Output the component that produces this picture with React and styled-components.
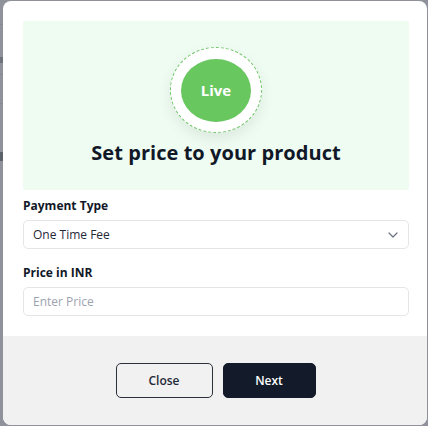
import React from "react";
import styled, { createGlobalStyle } from "styled-components";

const Global = createGlobalStyle`
  html, body { margin: 0; padding: 0; }
  body {
    background: #8f929a;
    font-family: "Open Sans", "Noto Sans", Arial, sans-serif;
    width: 428px;
    height: 426px;
    overflow: hidden;
  }
`;

const Backdrop = styled.div`
  position: relative;
  width: 428px;
  height: 426px;
  padding: 1px 1px 1px 3px;
  box-sizing: border-box;
`;

const GhostLine = styled.div`
  position: absolute;
  left: 0;
  width: 3px;
  top: ${(p) => p.$top}px;
  height: ${(p) => p.$h}px;
  background: ${(p) => p.$c};
`;

const Modal = styled.div`
  position: relative;
  width: 424px;
  height: 424px;
  background: #ffffff;
  border-radius: 8px;
  overflow: hidden;
  display: flex;
  flex-direction: column;
`;

const Body = styled.div`
  padding: 20px 18px 0 20px;
  display: flex;
  flex-direction: column;
  flex: 1;
`;

const Hero = styled.div`
  height: 169px;
  background: #effcf2;
  border-radius: 2px;
  display: flex;
  flex-direction: column;
  align-items: center;
  padding-top: 26px;
  box-sizing: border-box;
`;

const Ring = styled.div`
  width: 92px;
  height: 86px;
  box-sizing: border-box;
  border-radius: 50%;
  border: 1px dashed #6cc764;
  background: #ffffff;
  box-shadow: 0 6px 14px rgba(0, 0, 0, 0.08);
  display: flex;
  align-items: center;
  justify-content: center;
`;

const Dot = styled.div`
  width: 70px;
  height: 63px;
  border-radius: 50%;
  background: #68c75f;
  color: #ffffff;
  font-weight: 700;
  font-size: 15px;
  display: flex;
  align-items: center;
  justify-content: center;
  padding-bottom: 1px;
  box-sizing: border-box;
`;

const Title = styled.h2`
  margin: 6px 0 0;
  font-size: 20px;
  font-weight: 700;
  color: #111827;
  letter-spacing: 0.05px;
`;

const Field = styled.div`
  display: flex;
  flex-direction: column;
  margin-top: ${(p) => p.$mt}px;
`;

const Label = styled.label`
  font-size: 12px;
  font-weight: 700;
  color: #111827;
  line-height: 16px;
  margin-bottom: 6px;
`;

const Control = styled.div`
  height: 29px;
  box-sizing: border-box;
  border: 1px solid #e3e5e8;
  border-radius: 5px;
  display: flex;
  align-items: center;
  justify-content: space-between;
  padding: 0 10px 0 9px;
  font-size: 12px;
  color: ${(p) => (p.$placeholder ? "#9ca3af" : "#1f2937")};
`;

const Footer = styled.div`
  height: 89px;
  background: #f1f1f1;
  display: flex;
  justify-content: center;
  gap: 10px;
  padding: 27px 0 0 1px;
  box-sizing: border-box;
`;

const Button = styled.button`
  height: 35px;
  width: ${(p) => p.$w}px;
  border-radius: 5px;
  font-family: inherit;
  font-size: 12px;
  font-weight: 600;
  cursor: pointer;
  border: 1px solid ${(p) => (p.$primary ? "#131a29" : "#2b303b")};
  background: ${(p) => (p.$primary ? "#131a29" : "transparent")};
  color: ${(p) => (p.$primary ? "#ffffff" : "#1f2937")};
`;

export default function App() {
  return (
    <>
      <Global />
      <Backdrop>
        <GhostLine $top={24} $h={1} $c="#868991" />
        <GhostLine $top={57} $h={6} $c="#6f737c" />
        <GhostLine $top={74} $h={1} $c="#868991" />
        <GhostLine $top={103} $h={1} $c="#868991" />
        <GhostLine $top={152} $h={9} $c="#5d616a" />
        <Modal>
          <Body>
            <Hero>
              <Ring>
                <Dot>Live</Dot>
              </Ring>
              <Title>Set price to your product</Title>
            </Hero>
            <Field $mt={8}>
              <Label>Payment Type</Label>
              <Control>
                <span>One Time Fee</span>
                <svg width="10" height="6" viewBox="0 0 10 6" fill="none">
                  <path d="M1 1l4 4 4-4" stroke="#6b7280" strokeWidth="1.2" strokeLinecap="round" strokeLinejoin="round" />
                </svg>
              </Control>
            </Field>
            <Field $mt={16}>
              <Label>Price in INR</Label>
              <Control $placeholder>
                <span>Enter Price</span>
              </Control>
            </Field>
          </Body>
          <Footer>
            <Button $w={97}>Close</Button>
            <Button $w={93} $primary>Next</Button>
          </Footer>
        </Modal>
      </Backdrop>
    </>
  );
}
